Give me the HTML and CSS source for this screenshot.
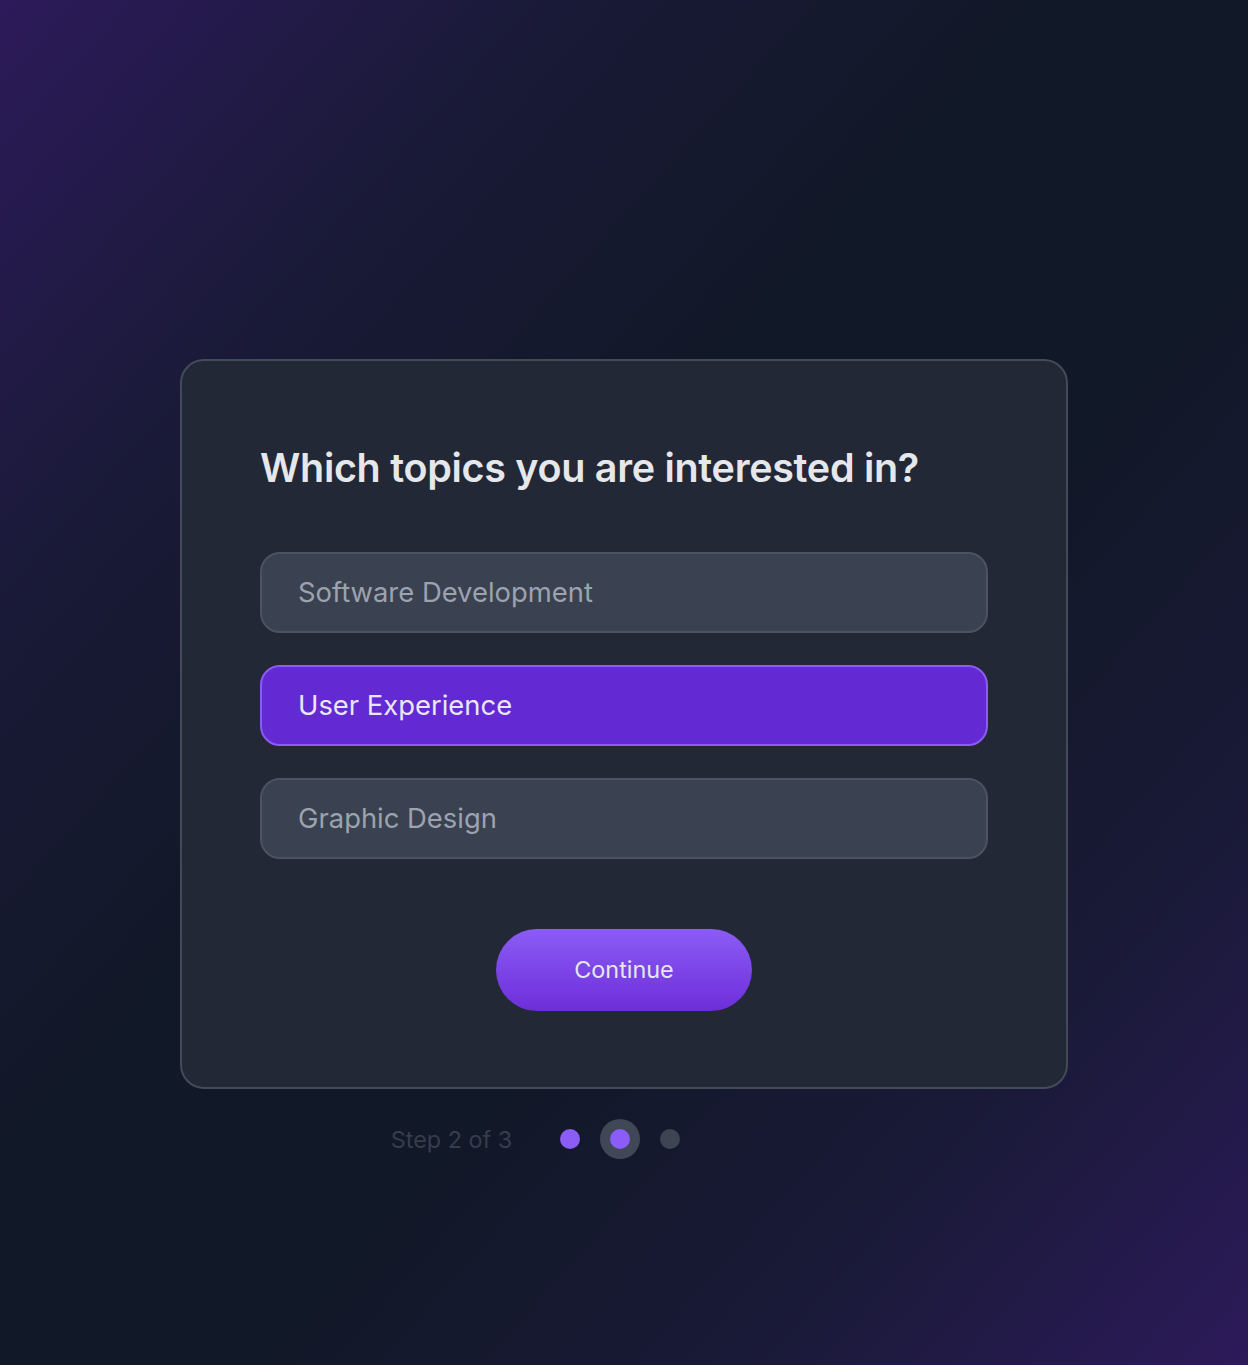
FILE: index.html
```html
<!DOCTYPE html>
<html>
<head>
<meta charset="utf-8">
<link rel="stylesheet" href="styles.css">
</head>
<body>
<main class="page">
  <section class="card">
    <h1 class="title">Which topics you are interested in?</h1>
    <div class="options">
      <button class="option">Software Development</button>
      <button class="option option--selected">User Experience</button>
      <button class="option">Graphic Design</button>
    </div>
    <div class="actions">
      <button class="continue">Continue</button>
    </div>
  </section>
  <div class="steps">
    <span class="steps__label">Step 2 of 3</span>
    <div class="dots">
      <span class="dot dot--done"></span>
      <span class="dot dot--current"></span>
      <span class="dot"></span>
    </div>
  </div>
</main>
</body>
</html>
```

FILE: styles.css
```css
* { box-sizing: border-box; }
html, body { margin: 0; padding: 0; }
body {
  width: 1248px;
  height: 1365px;
  font-family: Inter, "Noto Sans", sans-serif;
  background: linear-gradient(132deg, #2c1a5a 0%, #1a1a38 22%, #111827 42%, #111827 60%, #1a1a38 80%, #2c1a5a 100%);
  overflow: hidden;
}
.page {
  padding-top: 359px;
  display: flex;
  flex-direction: column;
  align-items: center;
}
.card {
  width: 888px;
  height: 730px;
  background: #222835;
  border: 2px solid #434a58;
  border-radius: 24px;
  padding: 80px 78px 78px;
}
.title {
  margin: 0 0 57px;
  font-size: 39.5px;
  line-height: 54px;
  font-weight: 600;
  color: #e5e7eb;
  letter-spacing: -0.3px;
}
.options {
  display: flex;
  flex-direction: column;
  gap: 32.5px;
}
.option {
  height: 80.5px;
  width: 100%;
  text-align: left;
  padding: 0 0 0 36px;
  font-family: inherit;
  font-size: 27.4px;
  font-weight: 400;
  color: #9ca3af;
  background: #3a4150;
  border: 2px solid #4b5262;
  border-radius: 20px;
}
.option--selected {
  background: #6329d2;
  border-color: #8b5cf6;
  color: #e9e7f5;
}
.actions {
  display: flex;
  justify-content: center;
  margin-top: 70px;
}
.continue {
  width: 256px;
  height: 82px;
  border: none;
  border-radius: 41px;
  background: linear-gradient(180deg, #8b5cf6 0%, #6d2ed9 100%);
  color: #e5e7eb;
  font-family: inherit;
  font-size: 23.4px;
  font-weight: 400;
}
.steps {
  width: 888px;
  display: flex;
  justify-content: center;
  align-items: center;
  gap: 48px;
  margin-top: 30px;
  padding-right: 177px;
  height: 40px;
}
.steps__label {
  font-size: 23.4px;
  color: #363d4c;
}
.dots {
  display: flex;
  align-items: center;
  gap: 30px;
}
.dot {
  width: 20px;
  height: 20px;
  border-radius: 50%;
  background: #3d4452;
}
.dot--done { background: #8b5cf6; }
.dot--current {
  background: #8b5cf6;
  box-shadow: 0 0 0 10px #404756;
}
```
